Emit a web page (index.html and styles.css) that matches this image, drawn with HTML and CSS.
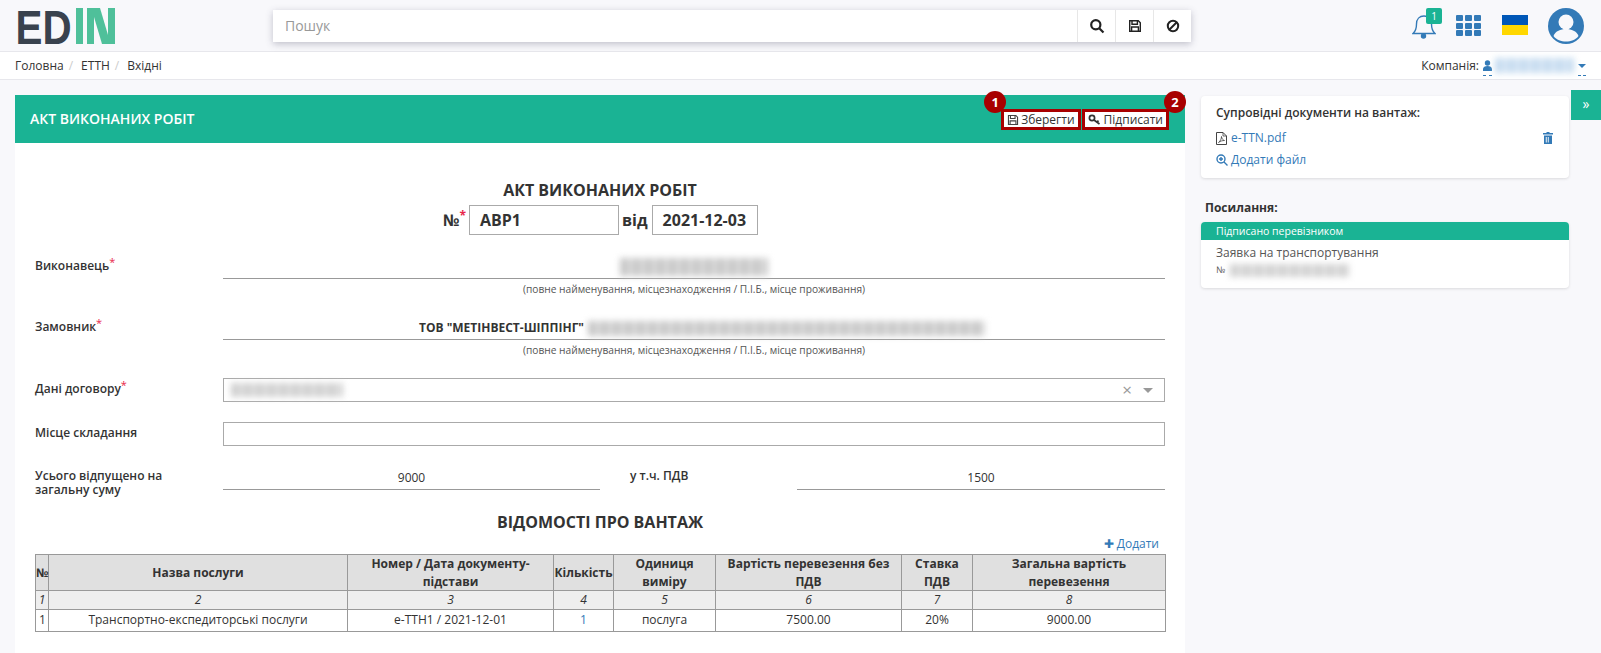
FILE: index.html
```html
<!DOCTYPE html>
<html lang="en">

<head>
    <meta charset="UTF-8">
    <meta name="viewport" content="width=device-width, initial-scale=1.0">
    <title>Акт виконаних робіт</title>
    <link rel="stylesheet" href="styles.css">
</head>

<body>
    <!-- Top bar -->
    <header class="topbar">
        <svg class="logo" width="98" height="36" viewBox="0 0 98 36">
            <text class="logo-text" x="-1.500" y="36" textLength="56" lengthAdjust="spacingAndGlyphs">ED</text>
            <rect x="59" y="0" width="7" height="36" fill="#4fc09a"/>
            <rect x="70" y="0" width="7" height="36" fill="#4fc09a"/>
            <polygon points="77,0 83,0 91,27 91,36 85,36 77,9" fill="#4fc09a"/>
            <rect x="91" y="0" width="7" height="36" fill="#4fc09a"/>
        </svg>

        <div class="search">
            <div class="search-input">Пошук</div>
            <button class="search-btn">
                <svg width="16" height="16" viewBox="0 0 16 16" fill="none" stroke="#222" stroke-width="2.2"><circle cx="6.8" cy="6.8" r="4.6"/><path d="M10.2 10.2 14.5 14.5"/></svg>
            </button>
            <button class="search-btn">
                <svg width="14" height="14" viewBox="0 0 14 14" fill="none" stroke="#222" stroke-width="1.4"><path d="M1.7 1.7h8.6l2 2v8.6H1.7z"/><path d="M4 1.7v3.6h5.4V1.7"/><path d="M3.6 12.3V8h6.8v4.3" /></svg>
            </button>
            <button class="search-btn">
                <svg width="14" height="14" viewBox="0 0 14 14" fill="none" stroke="#222" stroke-width="2"><circle cx="7" cy="7" r="5.2"/><path d="M3.5 10.5 10.5 3.5"/></svg>
            </button>
        </div>

        <div class="top-icons">
            <div class="bell">
                <svg width="24" height="27" viewBox="0 0 24 27" fill="none" stroke="#337ab7" stroke-width="1.4"><path d="M1 21.5c3-2.5 3.5-5 3.5-9.5 0-5 3-8 7.500-8s7.500 3 7.500 8c0 4.500.5 7 3.500 9.500z"/><circle cx="11.500" cy="24" r="2" fill="#337ab7"/></svg>
                <span class="bell-badge">1</span>
            </div>
            <div class="apps">
                <i></i><i></i><i></i><i></i><i></i><i></i><i></i><i></i><i></i>
            </div>
            <div class="flag"></div>
            <svg class="avatar" width="36" height="36" viewBox="0 0 36 36">
                <circle cx="18" cy="18" r="18" fill="#337ab7"/>
                <circle cx="18" cy="14" r="7.500" fill="#f8f8fb"/>
                <path d="M5.500 28c2-5 7-7 12.500-7s10.500 2 12.500 7c-3 4-7.500 5.500-12.500 5.500S8.500 32 5.500 28z" fill="#f8f8fb"/>
            </svg>
        </div>
    </header>

    <!-- Breadcrumbs -->
    <nav class="crumbs">
        <div class="crumb-list">
            <span>Головна</span><em>/</em><span>ЕТТН</span><em>/</em><span>Вхідні</span>
        </div>
        <div class="company">
            <span>Компанія:</span>
            <span class="company-user">
                <svg width="9" height="11" viewBox="0 0 9 11" fill="#337ab7"><circle cx="4.500" cy="3" r="2.700"/><path d="M0 11V9c0-2 2-3 4.500-3S9 7 9 9v2z"/></svg>
            </span>
            <span class="blur blur-company"></span>
            <span class="company-toggle"><span class="company-caret"></span></span>
        </div>
    </nav>

    <main class="content">
        <section class="panel">
            <div class="panel-head">
                <h2>АКТ ВИКОНАНИХ РОБІТ</h2>
                <div class="panel-actions">
                    <button class="action">
                        <svg width="12" height="12" viewBox="0 0 14 14" fill="none" stroke="#444" stroke-width="1.300"><path d="M1.700 1.700h8.600l2 2v8.600H1.700z"/><path d="M4 1.700v3.600h5.400V1.700"/><path d="M3.600 12.300V8h6.800v4.300"/></svg>
                        Зберегти
                        <span class="mark mark-left">1</span>
                    </button>
                    <button class="action">
                        <svg width="14" height="12" viewBox="0 0 14 12" fill="none" stroke="#333" stroke-width="1.700"><circle cx="4" cy="4" r="2.600"/><path d="M6 6 11.500 10M9 8.200l1.500-1.500"/></svg>
                        Підписати
                        <span class="mark mark-right">2</span>
                    </button>
                </div>
            </div>

            <div class="panel-body">
                <h1 class="doc-title">АКТ ВИКОНАНИХ РОБІТ</h1>
                <div class="doc-number">
                    <span class="doc-sign">№<sup>*</sup></span>
                    <div class="doc-input doc-input-num">АВР1</div>
                    <span>від</span>
                    <div class="doc-input doc-input-date">2021-12-03</div>
                </div>

                <div class="form-row row-executor">
                    <label class="line-label">Виконавець<sup>*</sup></label>
                    <div>
                        <div class="line-field"><span class="blur blur-executor"></span></div>
                        <div class="hint">(повне найменування, місцезнаходження / П.І.Б., місце проживання)</div>
                    </div>
                </div>

                <div class="form-row row-customer">
                    <label class="line-label">Замовник<sup>*</sup></label>
                    <div>
                        <div class="line-field customer-field"><b>ТОВ "МЕТІНВЕСТ-ШІППІНГ"</b><span class="blur blur-customer"></span></div>
                        <div class="hint">(повне найменування, місцезнаходження / П.І.Б., місце проживання)</div>
                    </div>
                </div>

                <div class="form-row row-contract">
                    <label class="box-label">Дані договору<sup>*</sup></label>
                    <div class="box-field select-field">
                        <span class="blur blur-contract"></span>
                        <span class="select-clear">×</span>
                        <span class="select-caret"></span>
                    </div>
                </div>

                <div class="form-row row-place">
                    <label class="box-label">Місце складання</label>
                    <div class="box-field"></div>
                </div>

                <div class="form-row row-total">
                    <label class="total-label">Усього відпущено на загальну суму</label>
                    <div class="total-fields">
                        <div class="line-field total-sum">9000</div>
                        <label class="vat-label">у т.ч. ПДВ</label>
                        <div class="line-field total-vat">1500</div>
                    </div>
                </div>

                <h2 class="cargo-title">ВІДОМОСТІ ПРО ВАНТАЖ</h2>
                <div class="add-row"><a href="#"><span class="plus">✚</span> Додати</a></div>

                <table class="cargo">
                    <colgroup>
                        <col class="c1"><col class="c2"><col class="c3"><col class="c4">
                        <col class="c5"><col class="c6"><col class="c7"><col class="c8">
                    </colgroup>
                    <thead>
                        <tr>
                            <th>№</th>
                            <th>Назва послуги</th>
                            <th>Номер / Дата документу-<br>підстави</th>
                            <th>Кількість</th>
                            <th>Одиниця<br>виміру</th>
                            <th>Вартість перевезення без ПДВ</th>
                            <th>Ставка ПДВ</th>
                            <th>Загальна вартість перевезення</th>
                        </tr>
                        <tr class="col-nums">
                            <td>1</td><td>2</td><td>3</td><td>4</td><td>5</td><td>6</td><td>7</td><td>8</td>
                        </tr>
                    </thead>
                    <tbody>
                        <tr>
                            <td class="cell-left">1</td>
                            <td>Транспортно-експедиторські послуги</td>
                            <td>е-ТТН1 / 2021-12-01</td>
                            <td class="cell-link">1</td>
                            <td>послуга</td>
                            <td>7500.00</td>
                            <td>20%</td>
                            <td>9000.00</td>
                        </tr>
                    </tbody>
                </table>
            </div>
        </section>

        <aside class="side">
            <div class="card files">
                <h3>Супровідні документи на вантаж:</h3>
                <div class="file-row">
                    <svg width="11" height="13" viewBox="0 0 11 13" fill="none" stroke="#444"><path d="M.5.500h6.500l3.500 3.500v8.500H.5z"/><path d="M7 .5V4h3.500M2.500 10.500c2-1.500 3-4 3-6 .3 2.500 1.500 3.500 3 4-2 0-4 .5-6 2z" stroke-width=".8"/></svg>
                    <a href="#">e-TTN.pdf</a>
                    <svg class="trash" width="10" height="12" viewBox="0 0 10 12" fill="#337ab7"><path d="M3.500 0h3v1H10v1.500H0V1h3.500z"/><path d="M1 3.500h8V12H1zM2.800 5v5.500h.9V5zm2 0v5.500h.9V5zm-1 0z" fill-rule="evenodd"/></svg>
                </div>
                <a class="add-file" href="#">
                    <svg width="12" height="12" viewBox="0 0 12 12" fill="none" stroke="#337ab7" stroke-width="1.400"><circle cx="5" cy="5" r="4"/><path d="M8 8l3.500 3.500M3 5h4M5 3v4"/></svg>
                    Додати файл
                </a>
            </div>

            <h3 class="links-title">Посилання:</h3>
            <div class="card link-card">
                <div class="link-status">Підписано перевізником</div>
                <div class="link-name">Заявка на транспортування</div>
                <div class="link-num">№ <span class="blur blur-link"></span></div>
            </div>
        </aside>

        <div class="side-toggle">»</div>
    </main>
</body>

</html>
```

FILE: styles.css
```css
/* Page */
html,
body {
    height: 100%;
}

body {
    margin: 0;
    display: flex;
    flex-direction: column;
    overflow: hidden;
    background: #f8f8fb;
    color: #333;
    font-family: "Open Sans", sans-serif;
    font-size: 12px;
}

a {
    color: #337ab7;
    text-decoration: none;
}

button {
    font-family: inherit;
}

/* Stand-in for the parts blurred out in the screenshot */
.blur {
    display: inline-block;
    background: repeating-linear-gradient(90deg, #c8c8c8 0 9px, #e6e6e6 9px 12px);
    filter: blur(3px);
}

/* Top bar */
.topbar {
    height: 51px;
    flex: none;
    display: flex;
    align-items: center;
    padding: 0 17px;
    border-bottom: 1px solid #e7e7ec;
}

.logo {
    flex: none;
    overflow: visible;
}

.logo-text {
    fill: #39424e;
    font-family: "Liberation Sans", sans-serif;
    font-size: 48px;
    font-weight: 700;
}

.search {
    width: 918px;
    height: 32px;
    margin-left: 158px;
    display: flex;
    background: #fff;
    box-shadow: 0 2px 7px rgba(60, 60, 90, 0.3);
}

.search-input {
    flex: 1;
    padding-left: 12px;
    color: #999;
    font-size: 14px;
    line-height: 32px;
}

.search-btn {
    width: 38px;
    padding: 0;
    display: flex;
    align-items: center;
    justify-content: center;
    background: #fff;
    border: none;
    border-left: 1px solid #e7e7e7;
}

.top-icons {
    margin-left: auto;
    display: flex;
    align-items: center;
}

.bell {
    position: relative;
    width: 24px;
    height: 27px;
}

.bell-badge {
    position: absolute;
    top: -4px;
    left: 14px;
    width: 16px;
    height: 16px;
    background: #1ab394;
    border-radius: 2px;
    color: #fff;
    font-size: 10px;
    line-height: 16px;
    text-align: center;
}

.apps {
    width: 25px;
    margin-left: 20px;
    display: grid;
    grid-template-columns: repeat(3, 7px);
    gap: 1.500px 2px;
}

.apps i {
    height: 6px;
    background: #337ab7;
    border-radius: 1px;
}

.flag {
    width: 26px;
    height: 20px;
    margin: -1px 0 0 21px;
    background: linear-gradient(#0057b7 50%, #ffd700 50%);
}

.avatar {
    margin-left: 20px;
}

/* Breadcrumbs */
.crumbs {
    height: 27px;
    flex: none;
    display: flex;
    align-items: center;
    justify-content: space-between;
    padding: 0 15px 0 15px;
    background: #fff;
    border-bottom: 1px solid #e7e7ec;
}

.crumb-list em {
    margin: 0 8px 0 5px;
    color: #ccc;
    font-style: normal;
}

.company {
    display: flex;
    align-items: center;
}

.company-user {
    display: block;
    height: 11px;
    margin-left: 4px;
    padding: 4px 0;
    border-bottom: 1px dashed #337ab7;
}

.company-user svg {
    display: block;
}

.blur-company {
    width: 79px;
    height: 15px;
    margin-left: 3px;
    background: repeating-linear-gradient(90deg, #c6dcf0 0 9px, #e4eef8 9px 12px);
}

.company-toggle {
    display: block;
    width: 8px;
    height: 4px;
    margin-left: 4px;
    padding: 8px 0 7px;
    border-bottom: 1px dashed #337ab7;
}

.company-caret {
    display: block;
    width: 0;
    height: 0;
    border: 4px solid transparent;
    border-top: 4px solid #337ab7;
    border-bottom: none;
}

/* Main area */
.content {
    flex: 1;
    min-height: 0;
    display: flex;
    padding: 10px 0 0 15px;
}

.panel {
    width: 1170px;
    margin-top: 5px;
    display: flex;
    flex-direction: column;
    background: #fff;
}

.panel-head {
    height: 48px;
    box-sizing: border-box;
    flex: none;
    display: flex;
    align-items: flex-start;
    justify-content: space-between;
    padding: 14px 16px 0 15px;
    background: #1ab394;
}

.panel-head h2 {
    margin: 0;
    color: #fff;
    font-size: 14px;
    font-weight: 600;
    line-height: 20px;
}

.panel-actions {
    display: flex;
}

.action {
    position: relative;
    height: 21px;
    box-sizing: border-box;
    display: flex;
    align-items: center;
    gap: 2px;
    padding: 0 3px;
    background: #fff;
    border: 3px solid #a80000;
    color: #333;
    font-size: 12px;
}

.action + .action {
    margin-left: 1px;
}

.mark {
    position: absolute;
    top: -21px;
    width: 22px;
    height: 22px;
    background: #a80000;
    border-radius: 50%;
    color: #fff;
    font-size: 13px;
    font-weight: 700;
    line-height: 22px;
    text-align: center;
}

.mark-left {
    left: -20px;
}

.mark-right {
    right: -20px;
}

.panel-body {
    flex: 1;
    padding: 37px 20px 0;
}

/* Document heading */
.doc-title {
    margin: 0;
    font-size: 16px;
    font-weight: 700;
    line-height: 20px;
    text-align: center;
}

.doc-number {
    margin: 5px 0 0 0;
    display: flex;
    align-items: center;
    padding-left: 408px;
    font-size: 16px;
    font-weight: 700;
}

.doc-sign {
    width: 22px;
}

.doc-sign sup {
    color: #e8274b;
    font-size: 12px;
    line-height: 0;
}

.doc-input {
    height: 28px;
    padding-left: 10px;
    border: 1px solid #aaa;
    font-size: 16px;
    line-height: 28px;
}

.doc-input-num {
    width: 138px;
    margin: 0 3px 0 4px;
}

.doc-input-date {
    width: 94px;
    margin-left: 4px;
}

/* Form rows */
.form-row {
    display: grid;
    grid-template-columns: 188px 1fr;
}

.form-row label {
    font-weight: 600;
    line-height: 16px;
}

.form-row sup {
    color: #e8274b;
    font-size: 11px;
    font-weight: 400;
    line-height: 0;
    vertical-align: 4px;
}

.form-row .line-label {
    padding-top: 2px;
}

.row-executor {
    margin-top: 21px;
}

.row-customer {
    margin-top: 21px;
}

.row-contract {
    margin-top: 21px;
}

.row-place {
    margin-top: 20px;
}

.row-total {
    margin-top: 21px;
}

.line-field {
    height: 22px;
    display: flex;
    align-items: center;
    justify-content: center;
    border-bottom: 1px solid #999;
    line-height: 22px;
}

.line-field b {
    margin-right: 4px;
    font-weight: 700;
}

.customer-field {
    padding-left: 16px;
}

.hint {
    margin-top: 3px;
    color: #555;
    font-size: 10.200px;
    line-height: 14px;
    text-align: center;
}

.blur-executor {
    width: 148px;
    height: 18px;
}

.blur-customer {
    width: 397px;
    height: 15px;
    flex: none;
}

.box-label {
    padding-top: 3px;
}

.box-field {
    height: 22px;
    display: flex;
    align-items: center;
    border: 1px solid #aaa;
}

.blur-contract {
    width: 112px;
    height: 14px;
    margin-left: 7px;
    background: repeating-linear-gradient(90deg, #d0d0d0 0 9px, #e8e8e8 9px 12px);
}

.select-clear {
    margin-left: auto;
    color: #999;
    font-size: 17px;
    line-height: 20px;
}

.select-caret {
    width: 0;
    height: 0;
    margin: 0 11px 0 11px;
    border: 5px solid transparent;
    border-top: 5px solid #999;
    border-bottom: none;
}

.form-row .total-label {
    line-height: 14px;
    padding: 2px 30px 0 0;
}

.total-fields {
    display: flex;
}

.total-sum {
    width: 377px;
    flex: none;
}

.form-row .vat-label {
    width: 197px;
    flex: none;
    padding: 1px 0 0 30px;
    box-sizing: border-box;
}

.total-vat {
    flex: 1;
}

/* Cargo table */
.cargo-title {
    margin: 15px 0 0;
    font-size: 16px;
    font-weight: 700;
    line-height: 20px;
    text-align: center;
}

.add-row {
    height: 21px;
    margin-top: 1px;
    padding-right: 6px;
    text-align: right;
    line-height: 21px;
}

.plus {
    font-size: 12px;
}

.cargo {
    width: 1130px;
    table-layout: fixed;
    border-collapse: collapse;
    line-height: 17.500px;
}

.cargo th,
.cargo td {
    padding: 0;
    border: 1px solid #999;
    text-align: center;
}

.cargo th {
    height: 35px;
    background: #e0e0e0;
    font-weight: 700;
}

.col-nums td {
    height: 17px;
    background: #eee;
    font-style: italic;
}

.cargo tbody td {
    height: 21px;
}

.cargo .cell-left {
    padding-left: 3px;
    text-align: left;
}

.cell-link {
    color: #337ab7;
}

.c1 { width: 13px; }
.c2 { width: 299px; }
.c3 { width: 206px; }
.c4 { width: 60px; }
.c5 { width: 102px; }
.c6 { width: 186px; }
.c7 { width: 71px; }
.c8 { width: 193px; }

/* Right column */
.side {
    width: 368px;
    margin: 6px 0 0 16px;
}

.card {
    background: #fff;
    border-radius: 4px;
    box-shadow: 0 1px 3px rgba(0, 0, 0, 0.12);
}

.files {
    height: 82px;
    padding: 9px 15px 0;
    box-sizing: border-box;
}

.files h3,
.links-title {
    margin: 0;
    font-size: 12px;
    font-weight: 600;
    line-height: 16px;
}

.file-row {
    margin-top: 8px;
    display: flex;
    align-items: center;
    gap: 4px;
    line-height: 18px;
}

.trash {
    margin-left: auto;
    margin-right: 1px;
}

.add-file {
    display: flex;
    align-items: center;
    gap: 3px;
    margin-top: 4px;
    line-height: 18px;
}

.links-title {
    margin: 22px 0 6px 4px;
    font-weight: 700;
}

.link-card {
    height: 66px;
    overflow: hidden;
}

.link-status {
    height: 18px;
    padding-left: 15px;
    background: #1ab394;
    color: #fff;
    font-size: 10.500px;
    line-height: 18px;
}

.link-name {
    margin-top: 4px;
    padding-left: 15px;
    color: #555;
    line-height: 18px;
}

.link-num {
    padding-left: 15px;
    color: #555;
    font-size: 9px;
    line-height: 16px;
    display: flex;
    align-items: center;
    gap: 5px;
}

.blur-link {
    width: 120px;
    height: 13px;
    background: repeating-linear-gradient(90deg, #d2d2d2 0 9px, #e8e8e8 9px 12px);
}

.side-toggle {
    width: 30px;
    height: 30px;
    margin-left: 2px;
    background: #1ab394;
    color: #fff;
    font-size: 14px;
    line-height: 28px;
    text-align: center;
}
```
